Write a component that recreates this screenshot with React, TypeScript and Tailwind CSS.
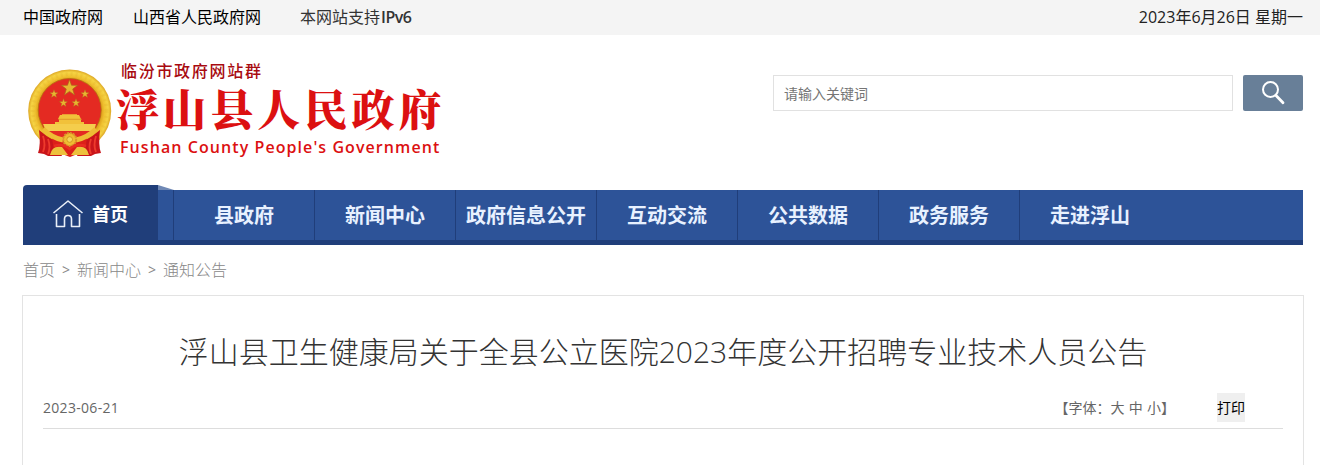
import { Fragment } from "react";

const NAV_ITEMS = ["县政府", "新闻中心", "政府信息公开", "互动交流", "公共数据", "政务服务", "走进浮山"];

const CRUMBS = ["首页", "新闻中心", "通知公告"];

const STAR = "M0,-1 L0.235,-0.324 L0.951,-0.309 L0.38,0.124 L0.588,0.809 L0,0.4 L-0.588,0.809 L-0.38,0.124 L-0.951,-0.309 L-0.235,-0.324 Z";

const STARS = [
  { x: 41.5, y: 19, r: 8.5 },
  { x: 26, y: 25, r: 4.4 },
  { x: 57, y: 25, r: 4.4 },
  { x: 35.5, y: 34, r: 4.4 },
  { x: 48, y: 34, r: 4.4 },
];

function Emblem() {
  return (
    <svg className="h-[88px] w-[84px] shrink-0" viewBox="0 0 84 88">
      <defs>
        <radialGradient id="gold" cx="50%" cy="50%" r="50%">
          <stop offset="75%" stopColor="#dc9c18" />
          <stop offset="84%" stopColor="#f0c332" />
          <stop offset="93%" stopColor="#f6d444" />
          <stop offset="100%" stopColor="#dca524" />
        </radialGradient>
      </defs>
      <circle cx="41.7" cy="42" r="41.5" fill="url(#gold)" />
      <circle cx="41.7" cy="42" r="37" fill="none" stroke="#d9a326" strokeWidth="4" strokeDasharray="2 3" opacity="0.18" />
      <circle cx="41.7" cy="41" r="31.5" fill="#e42a22" stroke="#b56d12" strokeWidth="0.8" />
      {STARS.map((s) => (
        <path key={`${s.x}-${s.y}`} d={STAR} fill="#e8b530" stroke="#a8641a" strokeWidth="0.08" transform={`translate(${s.x} ${s.y}) scale(${s.r})`} />
      ))}
      <path d="M32 46 H34 V45.3 H49 V46 H51 L53 50 H30 Z M31 50 H53 V53 H56 V56 H27 V53 H31 Z" fill="#f1c13a" />
      <path d="M15 55 H68 L66 62 H18 Z" fill="#f4cd4c" />
      <path d="M30 50.3 H54" stroke="#d98a22" strokeWidth="0.7" />
      <path d="M11 61 Q19 68 27 72 L34 87 H20 L16 85 L10 84 Q13 76 11 61 Z" fill="#c9151a" />
      <path d="M72 61 Q64 68 56 72 L49 87 H63 L67 85 L73 84 Q70 76 72 61 Z" fill="#c9151a" />
      <path d="M15 67 Q18 76 15 83 M20 70 Q23 78 20 85 M68 67 Q65 76 68 83 M63 70 Q60 78 63 85" stroke="#ee3a2c" strokeWidth="1.8" fill="none" />
      <path d="M24 69 Q42 76 59 69 L57 82 L42 88 L26 82 Z" fill="#dc2019" />
      <path d="M15 60 Q24 69 35 71 M68 60 Q59 69 48 71" stroke="#eebd35" strokeWidth="5" fill="none" />
      <path d="M22 86 Q24 76 34 78 L40 86 Z M61 86 Q59 76 49 78 L43 86 Z" fill="#edc13c" />
      <circle cx="41.7" cy="70.5" r="6.5" fill="#efbd32" stroke="#d9972a" strokeWidth="2" strokeDasharray="2 1" />
      <circle cx="41.7" cy="70.5" r="2.8" fill="#f6d75b" stroke="#c88719" strokeWidth="0.7" />
      <path d="M26 77 Q35 74 41.7 80 Q48 74 58 77" stroke="#e92d22" strokeWidth="2.5" fill="none" />
    </svg>
  );
}

function TopBar() {
  return (
    <div className="flex h-[35px] items-center bg-[#f4f4f4] pr-[17px] pl-[23px] text-base leading-[35px] text-black">
      <a>中国政府网</a>
      <a className="ml-[30px]">山西省人民政府网</a>
      <span className="ml-[39px] text-[#333]">
        本网站支持<span className="ml-px font-semibold tracking-[-0.5px]">IPv6</span>
      </span>
      <span className="ml-auto text-[#222]">2023年6月26日 星期一</span>
    </div>
  );
}

function Header() {
  return (
    <header className="flex h-[150px] justify-between pr-[17px] pl-[28px]">
      <div className="flex pt-[34px]">
        <Emblem />
        <div className="-mt-[9px] ml-[4px] whitespace-nowrap">
          <div className="ml-[5px] h-[22px] text-base leading-[22px] font-medium tracking-[1.7px] text-[#a80a10]">临汾市政府网站群</div>
          <div className="h-[52px] font-['Noto_Serif_CJK_SC','Noto_Sans_CJK_SC',serif] text-[43px] leading-[52px] font-black tracking-[4.1px] text-[#dc1011]">浮山县人民政府</div>
          <div className="ml-[4px] text-base leading-[26px] font-semibold tracking-[1.07px] text-[#dc1011]">Fushan County People's Government</div>
        </div>
      </div>
      <div className="flex gap-[10px] pt-[40px]">
        <input
          className="h-[36px] w-[460px] border border-[#e1e1e1] px-[10px] text-sm outline-none placeholder:text-[#757575]"
          placeholder="请输入关键词"
        />
        <button className="flex h-[36px] w-[60px] items-center justify-center rounded-[2px] bg-[#687f98]">
          <svg className="h-[24px] w-[24px]" viewBox="0 0 24 24" fill="none" stroke="#fff">
            <circle cx="9.5" cy="8.5" r="7.5" strokeWidth="2" />
            <path d="M15 14.5 L22 21.8" strokeWidth="2.8" strokeLinecap="round" />
          </svg>
        </button>
      </div>
    </header>
  );
}

function Nav() {
  return (
    <nav className="mr-[17px] ml-[23px] flex h-[60px] items-end">
      <a className="flex h-[60px] w-[135px] items-center rounded-tl-[4px] bg-[#203e7a] pb-[3px] pl-[30px] text-lg font-bold text-white">
        <svg className="h-[28px] w-[30px]" viewBox="0 0 30 28" fill="none" stroke="#e9eff8" strokeWidth="1.6" strokeLinejoin="round">
          <path d="M0.5 13 L15 1 L29.5 13" />
          <path d="M3.5 14 V26.5 H11.5 V19 Q11.5 15.5 15 15.5 Q18.5 15.5 18.5 19 V26.5 H26.5 V14" />
        </svg>
        <span className="ml-[9px] pt-px">首页</span>
      </a>
      <div className="flex h-[60px] w-[15px] flex-col">
        <svg className="h-[5px] w-[16px]" viewBox="0 0 16 5">
          <path d="M0 0 L16 5 H0 Z" fill="#6f88b5" />
        </svg>
        <div className="h-[55px] border-b-[5px] border-[#203e7a] bg-[#2d5398]" />
      </div>
      <div className="flex h-[55px] flex-1 border-b-[5px] border-[#203e7a] bg-[#2d5398]">
        {NAV_ITEMS.map((item) => (
          <a key={item} className="w-[141px] border-l border-[#203e7a] text-center text-xl leading-[52px] font-bold whitespace-nowrap text-[#e8f1ff]">
            {item}
          </a>
        ))}
      </div>
    </nav>
  );
}

function Breadcrumb() {
  return (
    <div className="flex h-[50px] items-center pl-[23px] text-base font-light text-[#888]">
      {CRUMBS.map((crumb, i) => (
        <Fragment key={crumb}>
          {i > 0 && <span className="w-[22px] text-center text-sm font-normal">&gt;</span>}
          <a>{crumb}</a>
        </Fragment>
      ))}
    </div>
  );
}

function Article() {
  return (
    <main className="mr-[16px] ml-[22px] h-[170px] border border-b-0 border-[#e3e3e3] px-[20px]">
      <h1 className="mt-[36px] h-[40px] text-center text-[30px] leading-[40px] font-light whitespace-nowrap text-[#333]">
        浮山县卫生健康局关于全县公立医院2023年度公开招聘专业技术人员公告
      </h1>
      <div className="mt-[16px] flex h-[41px] border-b border-[#ddd] text-sm text-[#666]">
        <span className="leading-[40px] tracking-[0.3px]">2023-06-21</span>
        <span className="ml-auto leading-[40px] whitespace-pre [word-spacing:0.6px]">【字体：大 中 小】</span>
        <button className="mt-[5px] mr-[38px] ml-[42px] h-[29px] w-[28px] bg-[#efefef] text-black">打印</button>
      </div>
    </main>
  );
}

export default function App() {
  return (
    <div className="h-[465px] w-[1320px] overflow-hidden bg-white font-['Open_Sans','Noto_Sans_CJK_SC',sans-serif]">
      <TopBar />
      <Header />
      <Nav />
      <Breadcrumb />
      <Article />
    </div>
  );
}
